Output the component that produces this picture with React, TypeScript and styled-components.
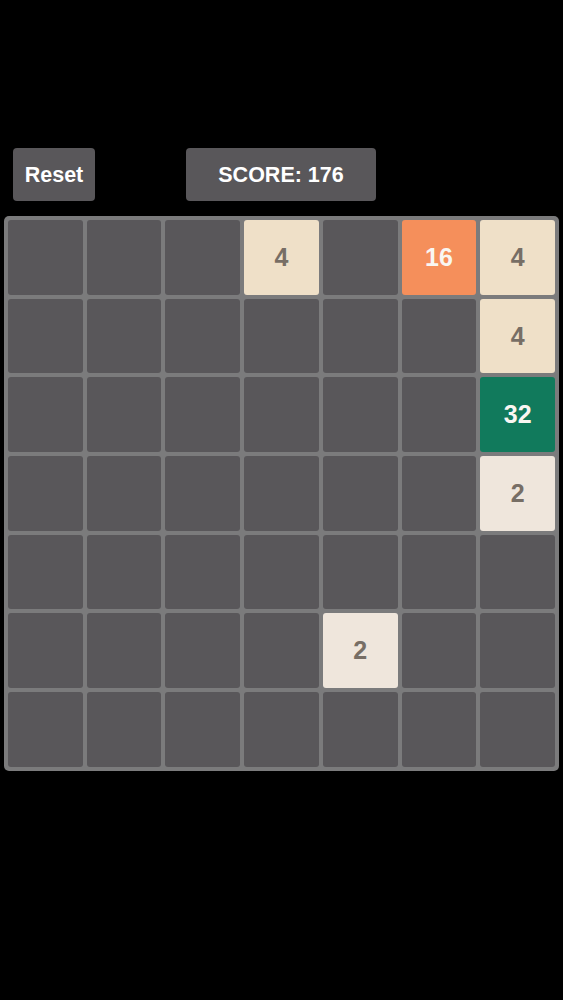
import styled, { createGlobalStyle } from 'styled-components';

const GlobalStyle = createGlobalStyle`
  html, body {
    margin: 0;
    padding: 0;
    background: #000;
  }
  body {
    font-family: "Liberation Sans", Arial, sans-serif;
  }
`;

const Screen = styled.div`
  width: 563px;
  height: 1000px;
  background: #000;
  padding-top: 148px;
  box-sizing: border-box;
`;

const Toolbar = styled.div`
  display: flex;
  align-items: center;
  padding-left: 13px;
  gap: 91px;
`;

const ToolButton = styled.button<{ $width: number }>`
  width: ${(p) => p.$width}px;
  height: 53px;
  border: none;
  border-radius: 4px;
  background: #59575a;
  color: #fff;
  font-family: "Liberation Sans", Arial, sans-serif;
  font-weight: bold;
  font-size: 21.5px;
  padding: 2px 0 0;
  cursor: pointer;
`;

const Board = styled.div`
  margin: 15px 0 0 4px;
  width: 555px;
  padding: 4px;
  box-sizing: border-box;
  background: #7b7b7c;
  border-radius: 5px;
  display: grid;
  grid-template-columns: repeat(7, 1fr);
  grid-auto-rows: 74.7px;
  gap: 4px;
`;

const tileStyles: Record<number, { bg: string; fg: string }> = {
  0: { bg: '#59575a', fg: 'transparent' },
  2: { bg: '#efe6dc', fg: '#776e65' },
  4: { bg: '#efe0c8', fg: '#776e65' },
  16: { bg: '#f58f5b', fg: '#f9f6f2' },
  32: { bg: '#117a5c', fg: '#f9f6f2' },
};

const Cell = styled.div<{ $value: number }>`
  border-radius: 3px;
  background: ${(p) => tileStyles[p.$value].bg};
  color: ${(p) => tileStyles[p.$value].fg};
  display: flex;
  align-items: center;
  justify-content: center;
  font-weight: bold;
  font-size: 25px;
`;

const grid: number[][] = [
  [0, 0, 0, 4, 0, 16, 4],
  [0, 0, 0, 0, 0, 0, 4],
  [0, 0, 0, 0, 0, 0, 32],
  [0, 0, 0, 0, 0, 0, 2],
  [0, 0, 0, 0, 0, 0, 0],
  [0, 0, 0, 0, 2, 0, 0],
  [0, 0, 0, 0, 0, 0, 0],
];

export default function App() {
  return (
    <>
      <GlobalStyle />
      <Screen>
        <Toolbar>
          <ToolButton $width={82}>Reset</ToolButton>
          <ToolButton $width={190}>SCORE: 176</ToolButton>
        </Toolbar>
        <Board>
          {grid.flatMap((row, r) =>
            row.map((v, c) => (
              <Cell key={`${r}-${c}`} $value={v}>
                {v > 0 ? v : ''}
              </Cell>
            ))
          )}
        </Board>
      </Screen>
    </>
  );
}
